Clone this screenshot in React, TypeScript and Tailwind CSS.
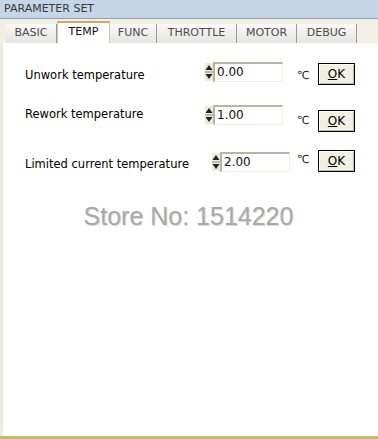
import React from 'react';

const tabs = [
  { name: 'BASIC', w: 'w-[51px]' },
  { name: 'TEMP', w: 'w-[53px]' },
  { name: 'FUNC', w: 'w-[47px]' },
  { name: 'THROTTLE', w: 'w-[80px]' },
  { name: 'MOTOR', w: 'w-[60px]' },
  { name: 'DEBUG', w: 'w-[60px]' },
];

const Spinner: React.FC = () => (
  <svg width="8" height="18" viewBox="0 0 8 18" className="shrink-0">
    <rect x="0" y="0" width="8" height="18" fill="#ece9d8" />
    <path d="M4 2 L7.5 7 L0.5 7 Z" fill="#222" />
    <path d="M4 16 L7.5 11 L0.5 11 Z" fill="#222" />
    <line x1="0" y1="9" x2="8" y2="9" stroke="#888" strokeWidth="1" />
  </svg>
);

const Field: React.FC<{ value: string }> = ({ value }) => (
  <div className="flex items-center">
    <Spinner />
    <div className="w-[70px] h-[20px] bg-white border-t-2 border-l-2 border-t-[#b8b4a6] border-l-[#b8b4a6] border-b border-r border-b-[#f1efe2] border-r-[#f1efe2] text-[12px] leading-[17px] pl-[2px] text-[#111]">
      {value}
    </div>
  </div>
);

const OkButton: React.FC = () => (
  <div className="w-[37px] h-[22px] border border-black bg-[#f2f0e2] shadow-[inset_1px_1px_0_#fff,inset_-1px_-1px_0_#bdb9a6] flex items-center justify-center text-[12px] text-black">
    <span><span className="underline">O</span>K</span>
  </div>
);

const rows = [
  { label: 'Unwork temperature', value: '0.00', h: 'h-[57px]', labelMt: 'mt-[25px]', fieldMt: 'mt-[19px]', fieldPl: 'pl-0', unit: 'mt-[26px] ml-[14px]', okMt: 'mt-[20px]' },
  { label: 'Rework temperature', value: '1.00', h: 'h-[45px]', labelMt: 'mt-[7px]', fieldMt: 'mt-[5px]', fieldPl: 'pl-0', unit: 'mt-[14px] ml-[14px]', okMt: 'mt-[10px]' },
  { label: 'Limited current temperature', value: '2.00', h: 'h-[35px]', labelMt: 'mt-[12px]', fieldMt: 'mt-[7px]', fieldPl: 'pl-[7px]', unit: 'mt-[8px] ml-[7px]', okMt: 'mt-[5px]' },
];

export default function App() {
  return (
    <div className="w-[378px] h-[439px] bg-white flex flex-col overflow-hidden font-['DejaVu_Sans',sans-serif]">
      <div className="h-[19px] shrink-0 bg-[#c4d6e7] border-b border-[#8aa2b9] text-[11px] leading-[18px] pl-[4px] text-[#3a3a3a]">
        PARAMETER SET
      </div>
      <div className="h-[24px] shrink-0 bg-[#f3efe5] flex items-end pl-[6px]">
        {tabs.map((t) =>
          t.name === 'TEMP' ? (
            <div
              key={t.name}
              className={`${t.w} h-[22px] bg-white border-t-2 border-t-[#e8a25a] border-l border-r border-[#c9c5b6] text-[11px] flex items-center justify-center text-[#111] pb-[2px]`}
            >
              {t.name}
            </div>
          ) : (
            <div
              key={t.name}
              className={`${t.w} h-[19px] bg-gradient-to-b from-[#fafafa] to-[#e4e4e0] border-r border-[#9c9a90] text-[11px] flex items-center justify-center text-[#4a4a4a] pb-[1px]`}
            >
              {t.name}
            </div>
          )
        )}
      </div>
      <div className="flex-1 flex">
        <div className="w-[3px] bg-[#f0ebe0]" />
        <div className="flex-1 flex flex-col">
          {rows.map((r) => (
            <div key={r.label} className={`flex items-start ${r.h}`}>
              <div className={`w-[202px] pl-[22px] text-[11.5px] leading-[14px] text-black ${r.labelMt}`}>{r.label}</div>
              <div className={`${r.fieldPl} ${r.fieldMt}`}>
                <Field value={r.value} />
              </div>
              <div className={`w-[12px] text-[11px] leading-[14px] text-[#222] ${r.unit}`}>℃</div>
              <div className={`ml-[9px] ${r.okMt}`}>
                <OkButton />
              </div>
            </div>
          ))}
          <div className="mt-[22px] text-center pr-[4px] text-[25px] leading-[29px] text-[#a9a9a9] font-['Liberation_Sans',sans-serif] [text-shadow:1px_1px_1px_#d8d8d8]">
            Store No: 1514220
          </div>
        </div>
      </div>
      <div className="h-[3px] shrink-0 bg-[#c8b86a]" />
    </div>
  );
}
